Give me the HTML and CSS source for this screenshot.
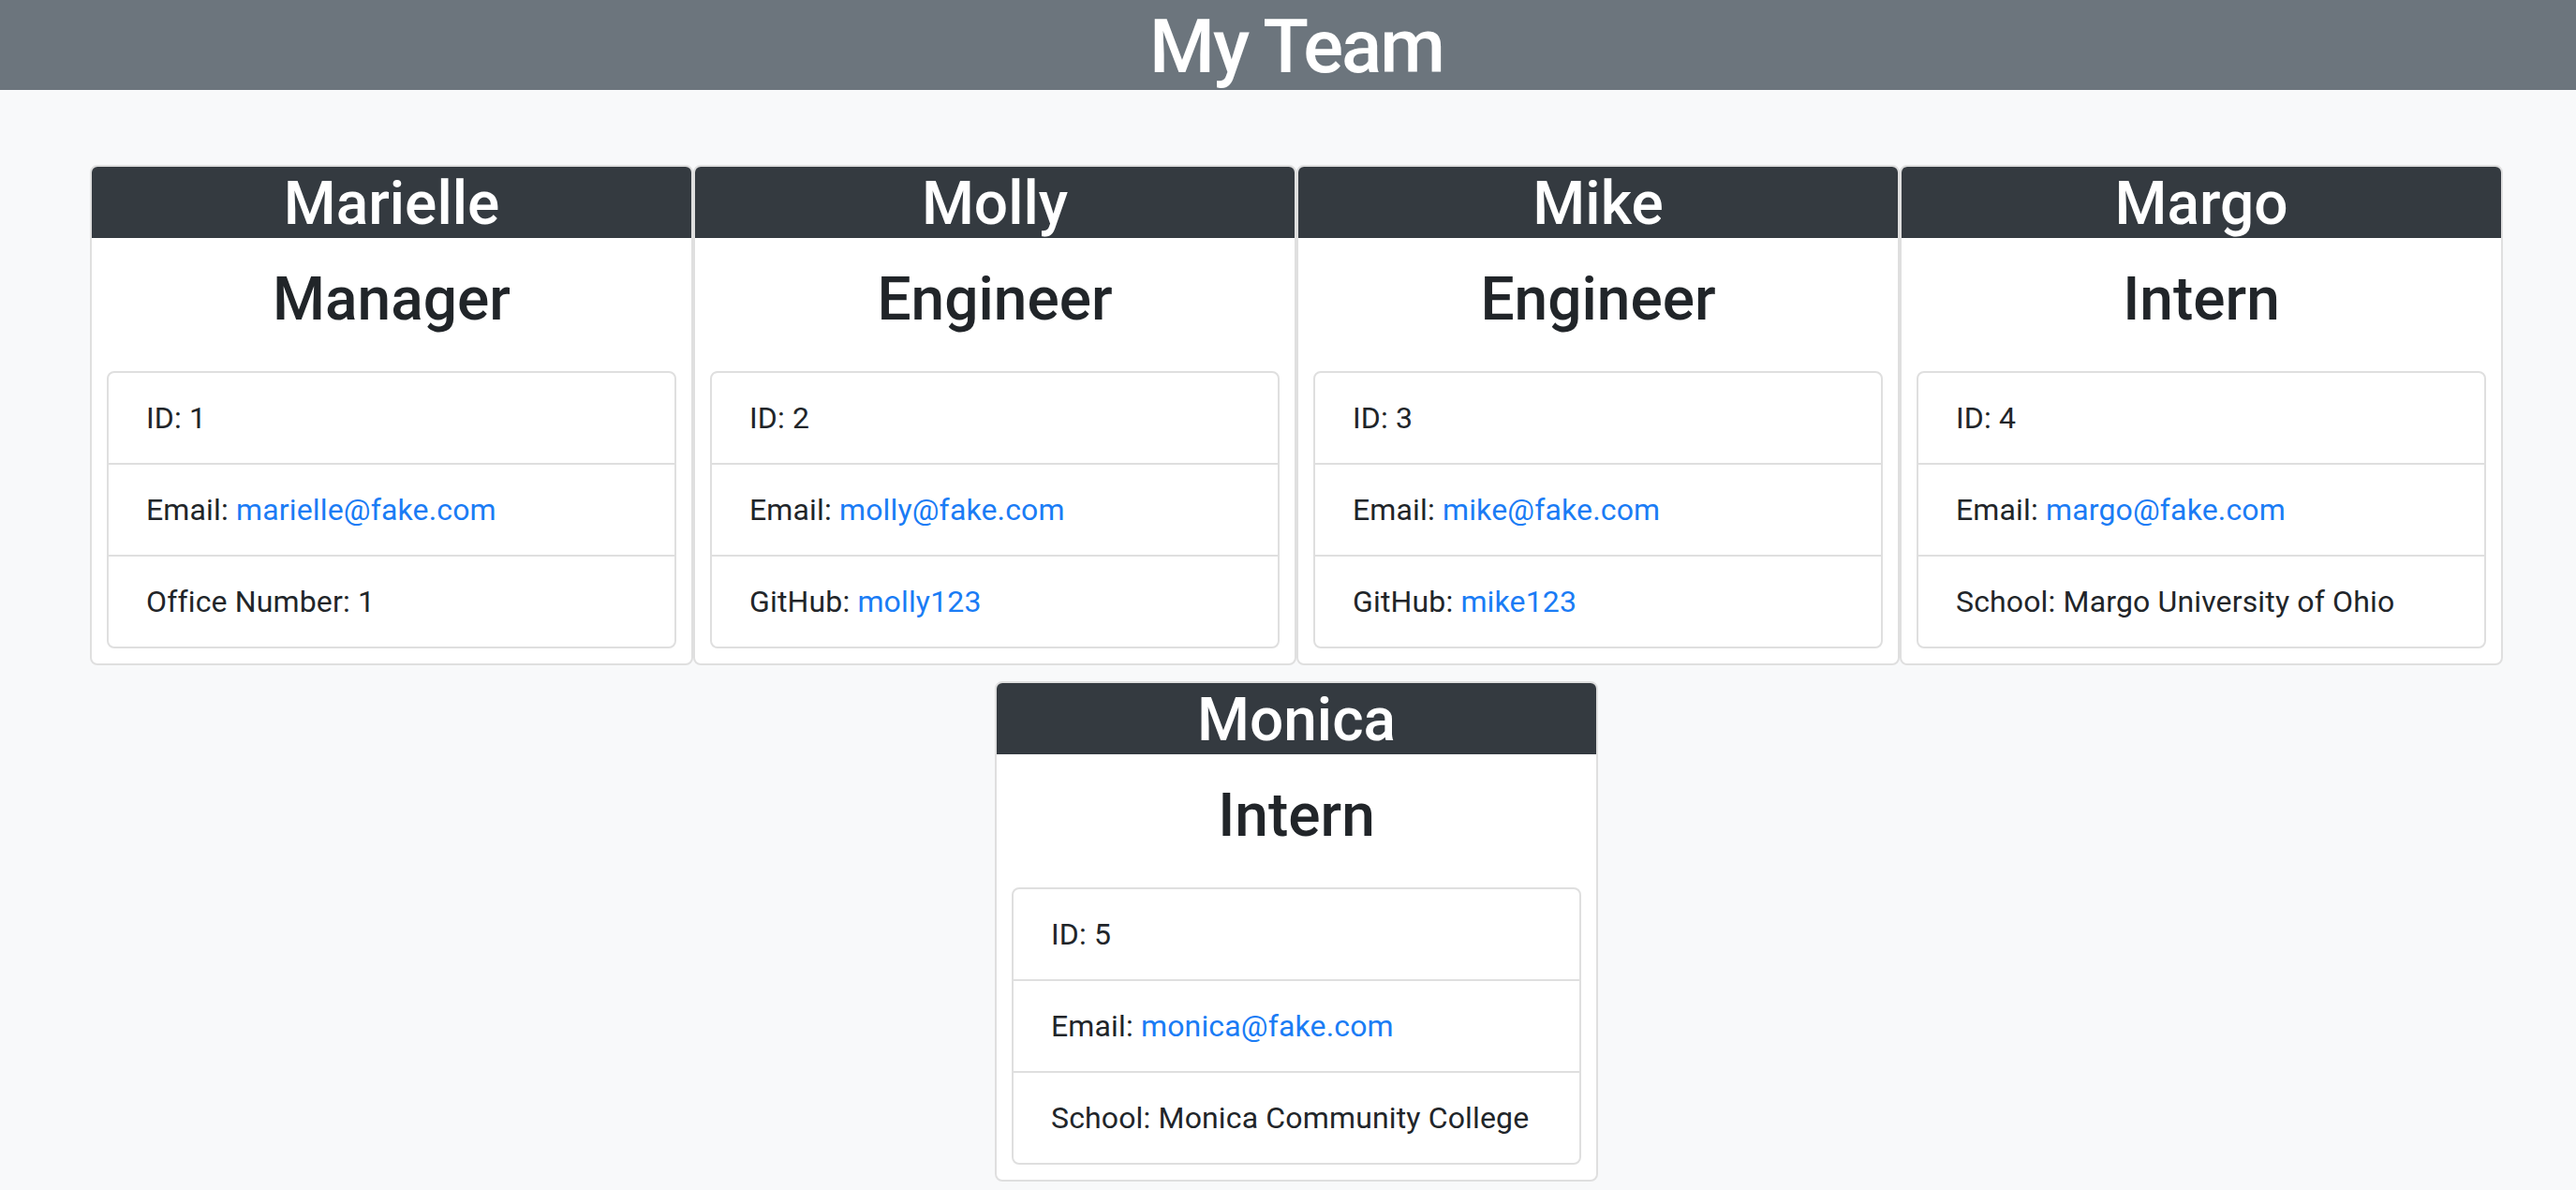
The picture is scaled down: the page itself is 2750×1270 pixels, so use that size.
FILE: index.html
```html
<!DOCTYPE html>
<html lang="en">
<head>
<meta charset="utf-8">
<title>My Team</title>
<link rel="stylesheet" href="styles.css">
</head>
<body>
<header class="top">
  <h1 class="top-title">My Team</h1>
</header>
<main class="team">
  <div class="card">
    <h2 class="card-name">Marielle</h2>
    <div class="card-body">
      <h2 class="card-role">Manager</h2>
      <ul class="info">
        <li class="info-item">ID: 1</li>
        <li class="info-item">Email: <a class="link" href="#">marielle@fake.com</a></li>
        <li class="info-item">Office Number: 1</li>
      </ul>
    </div>
  </div>
  <div class="card">
    <h2 class="card-name">Molly</h2>
    <div class="card-body">
      <h2 class="card-role">Engineer</h2>
      <ul class="info">
        <li class="info-item">ID: 2</li>
        <li class="info-item">Email: <a class="link" href="#">molly@fake.com</a></li>
        <li class="info-item">GitHub: <a class="link" href="#">molly123</a></li>
      </ul>
    </div>
  </div>
  <div class="card">
    <h2 class="card-name">Mike</h2>
    <div class="card-body">
      <h2 class="card-role">Engineer</h2>
      <ul class="info">
        <li class="info-item">ID: 3</li>
        <li class="info-item">Email: <a class="link" href="#">mike@fake.com</a></li>
        <li class="info-item">GitHub: <a class="link" href="#">mike123</a></li>
      </ul>
    </div>
  </div>
  <div class="card">
    <h2 class="card-name">Margo</h2>
    <div class="card-body">
      <h2 class="card-role">Intern</h2>
      <ul class="info">
        <li class="info-item">ID: 4</li>
        <li class="info-item">Email: <a class="link" href="#">margo@fake.com</a></li>
        <li class="info-item">School: Margo University of Ohio</li>
      </ul>
    </div>
  </div>
  <div class="card">
    <h2 class="card-name">Monica</h2>
    <div class="card-body">
      <h2 class="card-role">Intern</h2>
      <ul class="info">
        <li class="info-item">ID: 5</li>
        <li class="info-item">Email: <a class="link" href="#">monica@fake.com</a></li>
        <li class="info-item">School: Monica Community College</li>
      </ul>
    </div>
  </div>
</main>
</body>
</html>
```
FILE: styles.css
```css
* { box-sizing: border-box; }

html, body {
  margin: 0;
  padding: 0;
}

body {
  background: #f8f9fa;
  font-family: Roboto, "Liberation Sans", Arial, sans-serif;
  color: #212529;
  font-size: 32px;
  line-height: 1.5;
}

.top {
  background: #6c757d;
  text-align: center;
  padding-left: 18px;
}

.top-title {
  margin: 0;
  font-size: 80px;
  font-weight: 500;
  line-height: 96px;
  padding-top: 2px;
  height: 96px;
  color: #fff;
  letter-spacing: -2px;
}

.team {
  display: flex;
  flex-wrap: wrap;
  justify-content: center;
  row-gap: 17px;
  margin: 80px 77px 0 95px;
}

.card {
  width: 644px;
  background: #fff;
  border: 2px solid #dfdfdf;
  border-radius: 8px;
  overflow: hidden;
}

.card-name {
  margin: 0;
  padding-top: 4px;
  background: #343a40;
  color: #fff;
  text-align: center;
  font-size: 64px;
  font-weight: 500;
  line-height: 72px;
}

.card-body {
  padding: 16px;
}

.card-role {
  margin: 11px 0 38px;
  text-align: center;
  font-size: 64px;
  font-weight: 500;
  line-height: 77px;
}

.info {
  list-style: none;
  margin: 0;
  padding: 0;
  border: 2px solid #dfdfdf;
  border-radius: 8px;
}

.info-item {
  padding: 24px 40px;
  line-height: 48px;
  letter-spacing: 0.15px;
}

.info-item + .info-item {
  border-top: 2px solid #dfdfdf;
}

.link {
  color: #1a7cf5;
  text-decoration: none;
}
```
